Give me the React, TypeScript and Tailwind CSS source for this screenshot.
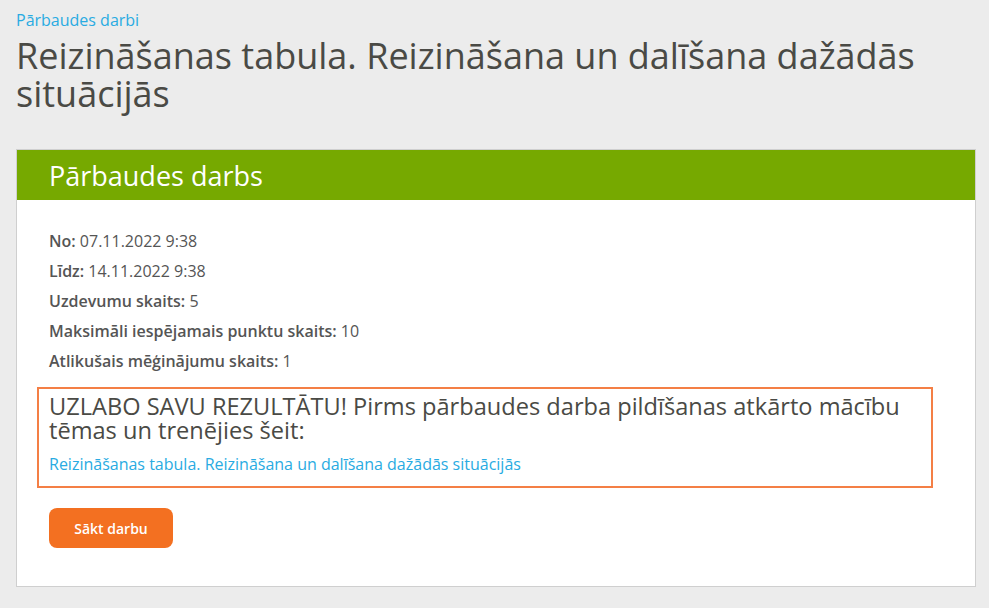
const info = [
  { label: "No:", value: "07.11.2022 9:38" },
  { label: "Līdz:", value: "14.11.2022 9:38" },
  { label: "Uzdevumu skaits:", value: "5" },
  { label: "Maksimāli iespējamais punktu skaits:", value: "10" },
  { label: "Atlikušais mēģinājumu skaits:", value: "1" },
]

export default function App() {
  return (
    <div className="min-h-[608px] bg-[#ececec] px-4 pt-[9px] pb-5 font-['Open_Sans',sans-serif] text-[#4a4a45]">
      <a href="#" className="block text-[16px] leading-[22px] text-[#29abe2]">
        Pārbaudes darbi
      </a>
      <h1 className="mt-[6px] text-[36px] leading-[38px] font-normal text-[#4a4a45]">
        Reizināšanas tabula. Reizināšana un dalīšana dažādās situācijās
      </h1>

      <div className="mt-[36px] w-[960px] border border-[#cfcfcf] bg-white">
        <div className="flex h-[50px] items-center bg-[#76a900] px-8">
          <h2 className="text-[27px] leading-none font-normal text-white">Pārbaudes darbs</h2>
        </div>

        <div className="px-8 pt-[26px] pb-[38px]">
          <ul className="text-[16px] leading-[30px] text-[#555]">
            {info.map((row) => (
              <li key={row.label}>
                <span className="font-semibold">{row.label}</span> {row.value}
              </li>
            ))}
          </ul>

          <div className="mt-[11px] -ml-3 w-[896px] border-2 border-[#f47f45] px-[10px] pt-[5px] pb-[12px]">
            <p className="text-[23.6px] leading-[24px] text-[#4a4a45]">
              UZLABO SAVU REZULTĀTU! Pirms pārbaudes darba pildīšanas atkārto mācību tēmas un trenējies šeit:
            </p>
            <a href="#" className="mt-[12px] block text-[16px] leading-[20px] text-[#29abe2]">
              Reizināšanas tabula. Reizināšana un dalīšana dažādās situācijās
            </a>
          </div>

          <button className="mt-5 flex h-10 w-[124px] items-center justify-center rounded-lg bg-[#f37021] text-[14px] font-semibold text-white">
            Sākt darbu
          </button>
        </div>
      </div>
    </div>
  )
}
